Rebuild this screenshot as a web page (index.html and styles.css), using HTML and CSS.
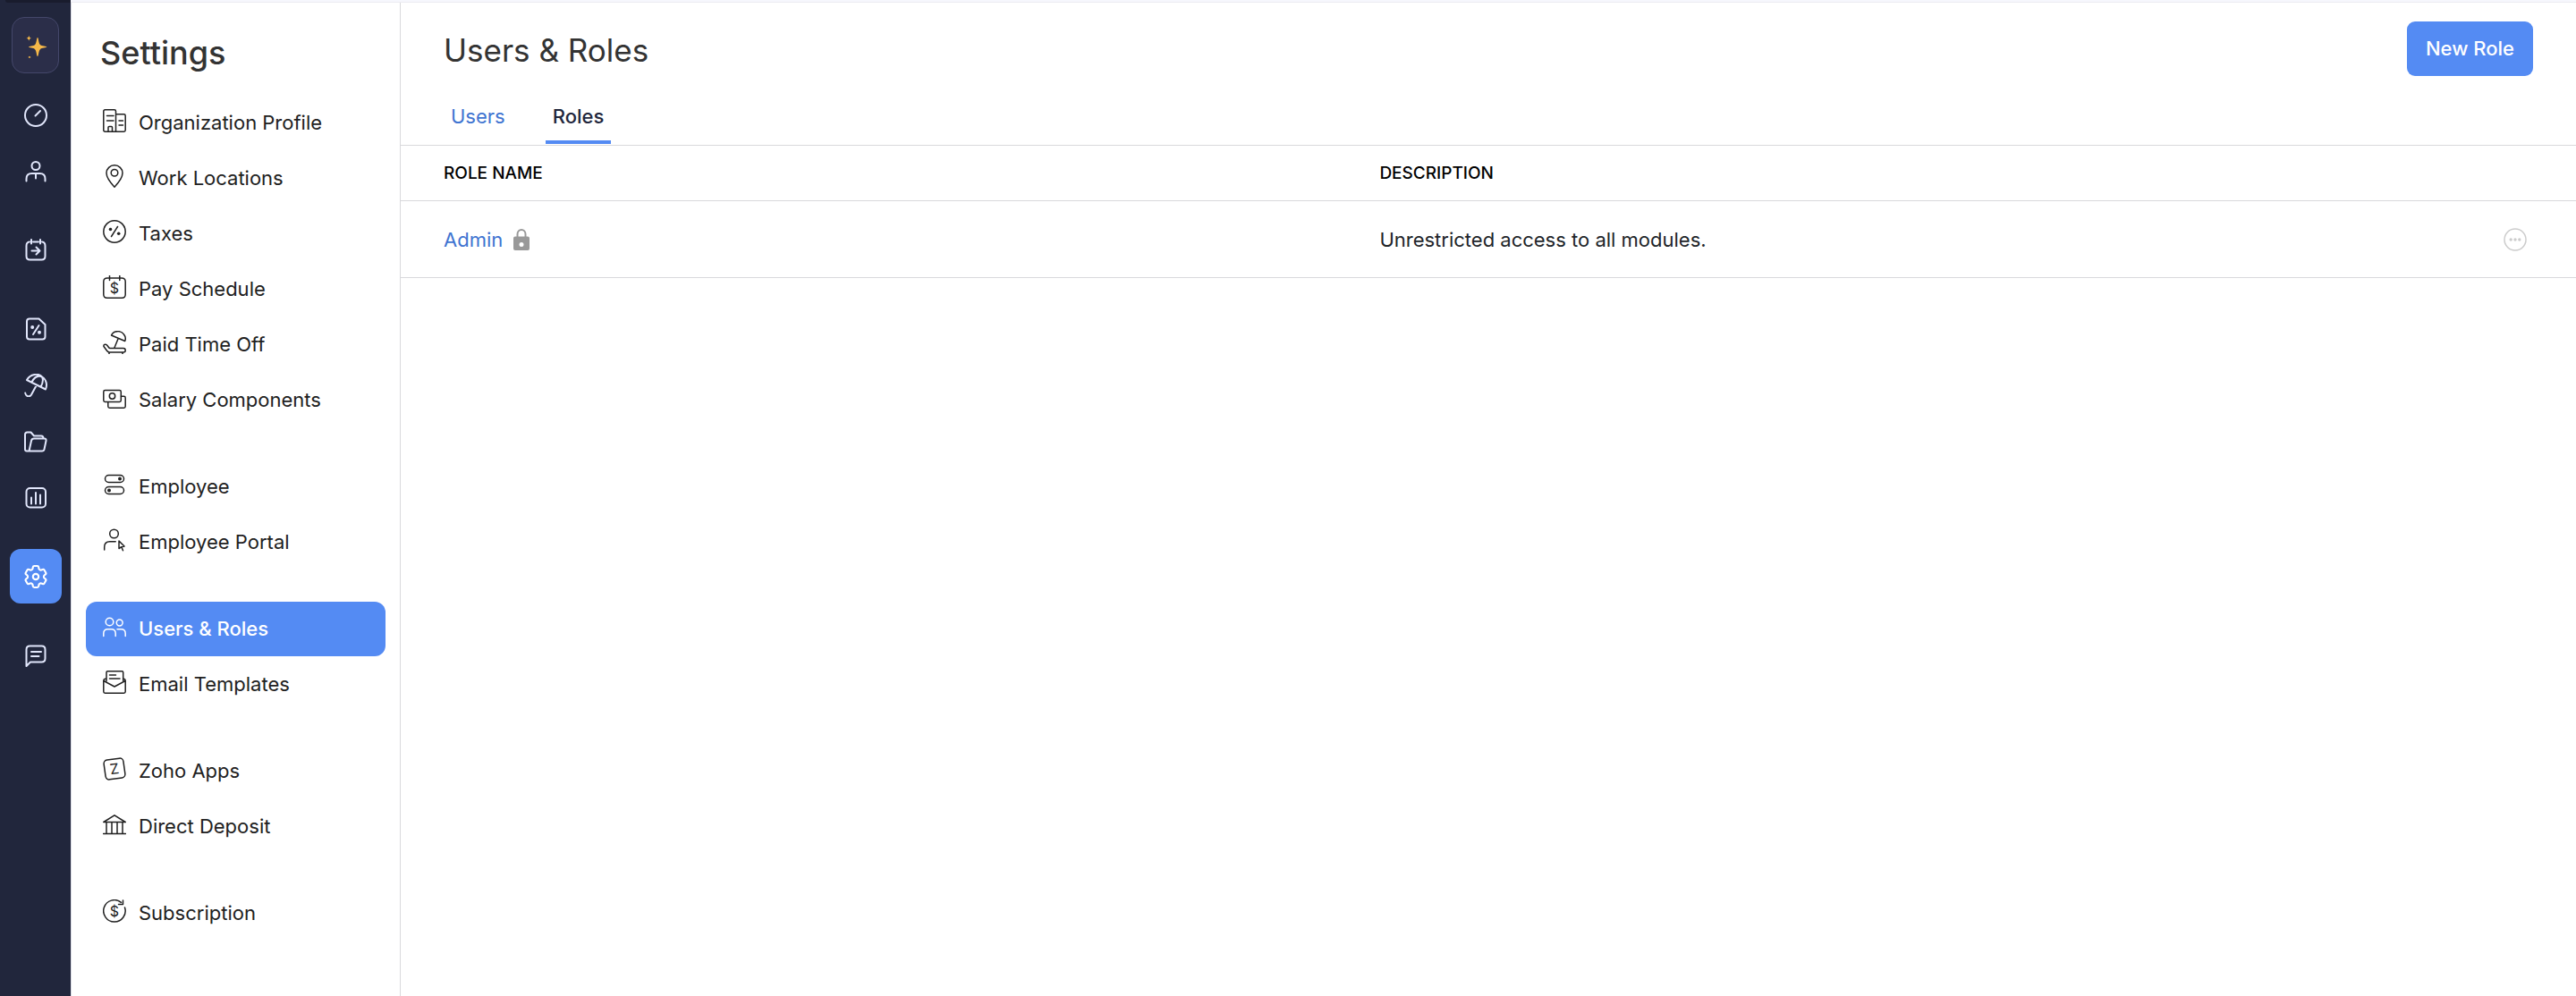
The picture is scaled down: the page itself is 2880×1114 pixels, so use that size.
FILE: index.html
```html
<!DOCTYPE html>
<html lang="en">
<head>
<meta charset="utf-8">
<meta name="viewport" content="width=device-width, initial-scale=1">
<title>Users &amp; Roles - Settings</title>
<link rel="stylesheet" href="styles.css">
</head>
<body>
<div class="app">
  <aside class="rail">
    <div class="rail-edge"></div>
    <nav class="rail-nav" aria-label="Modules">
      <button class="spark" type="button" aria-label="Assistant">
        <svg viewBox="0 0 26 26"><path d="M15 3c1.200 0 1 7 3.200 8.300C19.500 12.600 25.300 12.600 25.300 13.600c0 1-5.800 1-7.100 2.300C16 17.200 16.200 24 15 24c-1.200 0-1-6.800-3.200-8.100C10.500 14.600 5 14.600 5 13.600c0-1 5.500-1 6.800-2.300C14 10 13.800 3 15 3zM5.300.800c.4 2 1 2.600 2.900 3-1.900.4-2.500 1-2.900 3-.4-2-1-2.600-2.900-3 1.900-.4 2.500-1 2.900-3zM6 23.800l1.500 1.300L6 26l-1.500-.9z"/></svg>
      </button>
      <div class="rail-group">
        <a class="rail-item" href="#" aria-label="Dashboard"><svg viewBox="0 0 26 26"><circle cx="13" cy="13" r="12"/><path d="M12.500 13.500l5.500-5.500"/></svg></a>
        <a class="rail-item" href="#" aria-label="Employees"><svg viewBox="0 0 26 26"><circle cx="13" cy="6.500" r="4.500"/><path d="M2.500 23.500v-2.500q0-6 6-6h9q6 0 6 6v2.500M13 15v5.500"/></svg></a>
      </div>
      <div class="rail-group">
        <a class="rail-item" href="#" aria-label="Pay runs"><svg viewBox="0 0 26 26"><path d="M6 3.500Q2.500 4 2.500 8v11.500q0 4 4 4h13q4 0 4-4V8q0-4-3.500-4.500M10 3.500h6M8 1v4.500M18 1v4.500M8.500 13.500H17M13.500 9.500l4 4-4 4"/></svg></a>
      </div>
      <div class="rail-group">
        <a class="rail-item" href="#" aria-label="Taxes"><svg viewBox="0 0 26 26"><path d="M6 1.500h10.500L23.500 8v13.500q0 3-3 3H6q-3 0-3-3v-17q0-3 3-3zM16.500 9L10 19"/><circle class="dot" cx="9.200" cy="11" r="2"/><circle class="dot" cx="17" cy="16.700" r="2"/></svg></a>
        <a class="rail-item" href="#" aria-label="Benefits"><svg viewBox="0 0 26 26"><path d="M3 7C7 0 16-1 20 3.500c5 3 6 9 4 14L3 7zM8.500 9.300C12 3 16 1.500 20 3.500c1.500 3 1 7-1.500 11.200M14 12.500l-6 11Q6.500 26 3.500 25 1.500 24 1.200 21.500"/></svg></a>
        <a class="rail-item" href="#" aria-label="Documents"><svg viewBox="0 0 26 26"><path d="M5.500 23.500H3q-2 0-2-2V5q0-2.500 2.500-2.500h4l3.500 4h8q2.500 0 2.500 3M5.500 23.500l2.500-11.500q.5-2.500 3-2.500h11.500q2.500 0 2 2.500L22.500 21.500q-.5 2-2.500 2z"/></svg></a>
        <a class="rail-item" href="#" aria-label="Reports"><svg viewBox="0 0 26 26"><rect x="2.500" y="2" width="21.500" height="21.500" rx="4"/><path d="M8 12.500v7M13 7v12.500M18 9.500v10"/></svg></a>
      </div>
      <div class="rail-group">
        <a class="rail-item rail-item-active" href="#" aria-label="Settings" aria-current="page"><svg viewBox="2.200 2.200 19.600 19.600"><path class="gear" d="M9.594 3.940c.09-.542.56-.94 1.110-.94h2.593c.55 0 1.020.398 1.110.94l.213 1.281c.063.374.313.686.645.87.074.04.147.083.22.127.325.196.72.257 1.075.124l1.217-.456a1.125 1.125 0 0 1 1.370.49l1.296 2.247a1.125 1.125 0 0 1-.26 1.431l-1.003.827c-.293.241-.438.613-.43.992a7.723 7.723 0 0 1 0 .255c-.008.378.137.75.43.991l1.004.827c.424.35.534.955.26 1.430l-1.298 2.247a1.125 1.125 0 0 1-1.369.491l-1.217-.456c-.355-.133-.75-.072-1.076.124a6.470 6.470 0 0 1-.22.128c-.331.183-.581.495-.644.869l-.213 1.281c-.09.543-.56.94-1.110.94h-2.594c-.55 0-1.019-.398-1.110-.94l-.213-1.281c-.062-.374-.312-.686-.644-.87a6.520 6.520 0 0 1-.22-.127c-.325-.196-.72-.257-1.076-.124l-1.217.456a1.125 1.125 0 0 1-1.369-.49l-1.297-2.247a1.125 1.125 0 0 1 .26-1.431l1.004-.827c.292-.24.437-.613.43-.991a6.932 6.932 0 0 1 0-.255c.007-.38-.138-.751-.43-.992l-1.004-.827a1.125 1.125 0 0 1-.26-1.430l1.297-2.247a1.125 1.125 0 0 1 1.370-.491l1.216.456c.356.133.751.072 1.076-.124.072-.044.146-.086.22-.128.332-.183.582-.495.644-.869l.214-1.280z"/><circle class="gear" cx="12" cy="12" r="2.400"/></svg></a>
      </div>
      <div class="rail-group">
        <a class="rail-item" href="#" aria-label="Messages"><svg viewBox="0 0 26 26"><path d="M2.500 25V6.500q0-4 4-4h13q4 0 4 4v10q0 4-4 4H7L2.500 25zM8 9h11M8 14h8.500"/></svg></a>
      </div>
    </nav>
  </aside>

  <div class="page">
    <div class="page-edge"></div>
    <div class="columns">
      <aside class="settings">
        <h2 class="settings-title">Settings</h2>
        <nav class="menu" aria-label="Settings">
          <ul class="menu-group">
            <li><a class="menu-item" href="#"><svg viewBox="0 0 26 26"><path d="M14.500 25.200H2.500q-1.700 0-1.700-1.700v-21Q.8.800 2.500.8h10.300q1.700 0 1.700 1.700v22.700h9q1.700 0 1.700-1.700v-16q0-1.700-1.700-1.700h-9M4.500 7.500h7.500M4.500 13h7.500M18 13h4.500M18 18h4.500M6 25v-4.500q0-1 1-1h2.500q1 0 1 1V25"/></svg>Organization Profile</a></li>
            <li><a class="menu-item" href="#"><svg viewBox="0 0 26 26"><path d="M13 25.200Q4 15.500 4 9.500a9 8.700 0 0 1 18 0Q22 15.500 13 25.200z"/><circle cx="13" cy="9.200" r="3.800"/></svg>Work Locations</a></li>
            <li><a class="menu-item" href="#"><svg viewBox="0 0 26 26"><circle cx="13" cy="13" r="12.200"/><path d="M16.500 7.500l-7 11"/><circle class="dot" cx="8.500" cy="10.500" r="1.800"/><circle class="dot" cx="17.700" cy="15.200" r="1.800"/></svg>Taxes</a></li>
            <li><a class="menu-item" href="#"><svg viewBox="0 0 26 26"><path d="M5 3Q.8 3 .8 7v14.200q0 4 4 4h16.400q4 0 4-4V7q0-4-4.200-4M5 3h16M7.500.5v5M18.800.5v5"/><text x="13" y="20" text-anchor="middle">$</text></svg>Pay Schedule</a></li>
            <li><a class="menu-item" href="#"><svg viewBox="0 0 26 26"><path d="M9.500 5C12-.5 20-.8 23.500 4c2 2.600 2 5.500 1.200 7.500L9.500 5zM17.200 8.500l-4.500 11M8 19.500h15q2.200 0 2.200 2.400 0 2-2.200 2H7.200q-1.500 0-2.500-1.400L1 17.500Q.5 15 3 15.200q1.200.1 2.200 1.500l1.300 1.800q.6 1 1.500 1zM7 24v2M22 24v2"/></svg>Paid Time Off</a></li>
            <li><a class="menu-item" href="#"><svg viewBox="0 0 26 26"><rect x=".8" y="4.500" width="19.500" height="13" rx="1.700"/><circle cx="10.500" cy="11" r="3.200"/><path d="M20.500 11.300h3q1.700 0 1.700 1.700v9.500q0 1.700-1.700 1.700H7.500q-1.700 0-1.700-1.700v-4.800"/></svg>Salary Components</a></li>
          </ul>
          <ul class="menu-group">
            <li><a class="menu-item" href="#"><svg viewBox="0 0 26 26"><rect x="2.500" y="2.500" width="21" height="8" rx="4"/><rect x="2.500" y="15.500" width="21" height="8" rx="4"/><circle class="dot" cx="19" cy="6.500" r="2"/><circle class="dot" cx="7" cy="19.500" r="2"/></svg>Employee</a></li>
            <li><a class="menu-item" href="#"><svg viewBox="0 0 26 26"><circle cx="12.500" cy="6" r="4.800"/><path d="M1.700 24v-3q0-6.300 6-6.300h6.500M18 14l6 6-3.200.7 1.700 4M18 14v8.500l2.800-1.800"/></svg>Employee Portal</a></li>
          </ul>
          <ul class="menu-group">
            <li><a class="menu-item menu-item-active" href="#" aria-current="page"><svg viewBox="0 0 26 26"><circle cx="7.500" cy="7.500" r="4.300"/><circle cx="18.700" cy="8.500" r="3.400"/><path d="M.8 23.500v-3q0-4.800 4.700-4.800h4q4.700 0 4.700 4.800v3M16 15.700h4.500q4.700 0 4.700 4.800v3"/></svg>Users &amp; Roles</a></li>
            <li><a class="menu-item" href="#"><svg viewBox="0 0 26 26"><path d="M4 11.500V2q0-1.200 1.200-1.200h16.300q1.200 0 1.200 1.200v9.500M7.500 5h7M7.500 9h11.500M4 9L2 9.500Q.8 10 .8 11.500v12q0 1.700 1.700 1.700h21q1.700 0 1.700-1.700v-12q0-1.500-1.200-2L22.500 9M1 11.500l12 6.500 12-6.500"/></svg>Email Templates</a></li>
          </ul>
          <ul class="menu-group">
            <li><a class="menu-item" href="#"><svg viewBox="0 0 26 26"><g transform="rotate(-8 13 13)"><rect x="2" y="2" width="22" height="22" rx="4"/><text x="13" y="18.500" text-anchor="middle">Z</text></g></svg>Zoho Apps</a></li>
            <li><a class="menu-item" href="#"><svg viewBox="0 0 26 26"><path d="M.8 10.500L13 2.800l12.200 7.700zM.5 23.500h25M4 10.500v13M10 10.500v13M16 10.500v13M22 10.500v13"/></svg>Direct Deposit</a></li>
          </ul>
          <ul class="menu-group">
            <li><a class="menu-item" href="#"><svg viewBox="0 0 26 26"><path d="M24.500 9A12.200 12.200 0 1 1 20.500 3.300M22.500 1v4.500H17.500"/><text x="13" y="18.500" text-anchor="middle">$</text></svg>Subscription</a></li>
          </ul>
        </nav>
      </aside>

      <main class="content">
        <header class="content-head">
          <h1 class="content-title">Users &amp; Roles</h1>
          <button class="primary" type="button">New Role</button>
        </header>
        <nav class="tabs" aria-label="Users and roles">
          <a class="tab" href="#">Users</a>
          <a class="tab tab-active" href="#" aria-current="page">Roles</a>
        </nav>
        <table class="roles">
          <thead>
            <tr><th class="col-name" scope="col">ROLE NAME</th><th scope="col">DESCRIPTION</th><td class="col-more"></td></tr>
          </thead>
          <tbody>
            <tr>
              <td class="col-name"><div class="role"><a href="#">Admin</a><svg class="lock" viewBox="0 0 18 24"><path d="M4.500 10V6a4.500 5 0 0 1 9 0v4" fill="none" stroke="currentColor" stroke-width="2"/><path fill="currentColor" fill-rule="evenodd" d="M2 8.500h14q2 0 2 2V22q0 2-2 2H2q-2 0-2-2V10.500q0-2 2-2zm7 6.500a2.500 2.500 0 1 0 0 5 2.500 2.500 0 0 0 0-5z"/></svg></div></td>
              <td>Unrestricted access to all modules.</td>
              <td class="col-more"><button class="more" type="button" aria-label="More actions"><svg viewBox="0 0 26 26"><circle cx="13" cy="13" r="12" fill="none" stroke="currentColor" stroke-width="1.500"/><g fill="currentColor"><circle cx="8.200" cy="13" r="1.700"/><circle cx="13" cy="13" r="1.700"/><circle cx="17.800" cy="13" r="1.700"/></g></svg></button></td>
            </tr>
          </tbody>
        </table>
      </main>
    </div>
  </div>
</div>
</body>
</html>
```
FILE: styles.css
```css
* { box-sizing: border-box; }

body {
  margin: 0;
  background: #fff;
  color: #212121;
  font-family: Inter, "Liberation Sans", sans-serif;
  font-size: 22px;
  line-height: 32px;
}

a { color: inherit; text-decoration: none; }
button { font: inherit; cursor: pointer; }
svg { display: block; flex: none; }
h1, h2, ul { margin: 0; padding: 0; }
ul { list-style: none; }

.app { display: flex; min-height: 100vh; }

/* Module rail */
.rail { flex: 0 0 79px; background: #21263c; }
.rail-edge {
  height: 3px;
  margin-left: 6px;
  border-bottom-left-radius: 8px;
  background: #191c2d;
}
.rail-nav {
  display: flex;
  flex-direction: column;
  align-items: center;
  padding: 16px 0;
}
.spark {
  display: grid;
  place-items: center;
  width: 53px;
  height: 63px;
  margin-bottom: 16px;
  padding: 2px 0 0;
  border: 1px solid #44476a;
  border-radius: 14px;
  background: #2b2e49;
}
.spark svg { width: 26px; height: 26px; fill: #f5b849; }
.rail-group { display: flex; flex-direction: column; gap: 2px; }
.rail-group + .rail-group { margin-top: 27px; }
.rail-item {
  display: grid;
  place-items: center;
  width: 58px;
  height: 61px;
  border-radius: 12px;
  color: #e1e6fb;
}
.rail-item-active { background: #548bf3; color: #fff; }
.rail-item svg {
  width: 26px;
  height: 26px;
  fill: none;
  stroke: currentColor;
  stroke-width: 2;
  stroke-linecap: round;
  stroke-linejoin: round;
}
.rail-item .gear { stroke-width: 1.600; }
.rail-item .dot, .menu-item .dot { fill: currentColor; stroke: none; }

/* Page */
.page { display: flex; flex: 1; flex-direction: column; min-width: 0; }
.page-edge { height: 3px; border-bottom: 1px solid #ececf1; background: #f6f7fd; }
.columns { display: flex; flex: 1; }

/* Settings menu */
.settings {
  flex: 0 0 369px;
  padding: 34px 16px;
  border-right: 1px solid #d9d9dc;
  border-left: 1px solid #dadce6;
}
.settings-title {
  padding-left: 16px;
  color: #333;
  font-size: 36px;
  font-weight: 500;
  line-height: 44px;
}
.menu { margin-top: 26px; }
.menu-group { display: flex; flex-direction: column; gap: 1px; }
.menu-group + .menu-group { margin-top: 36px; }
.menu-item {
  display: flex;
  align-items: center;
  gap: 14px;
  height: 61px;
  padding: 0 0 2px 19px;
  border-radius: 12px;
}
.menu-item-active { background: #548bf3; color: #fff; font-weight: 500; }
.menu-item svg {
  width: 26px;
  height: 26px;
  margin-bottom: 4px;
  fill: none;
  stroke: currentColor;
  stroke-width: 1.500;
  stroke-linecap: round;
  stroke-linejoin: round;
}
.menu-item text { fill: currentColor; stroke: none; font-size: 16px; font-weight: 400; }

/* Content */
.content { flex: 1; min-width: 0; }
.content-head {
  display: flex;
  align-items: center;
  justify-content: space-between;
  padding: 21px 48px 0 48px;
}
.content-title { color: #333; font-size: 35px; font-weight: 400; line-height: 44px; padding-top: 2px; }
.primary {
  height: 61px;
  padding: 0 21px 2px;
  border: 0;
  border-radius: 9px;
  background: #548bf3;
  color: #fff;
  font-weight: 500;
}
.tabs {
  display: flex;
  gap: 37px;
  margin-top: 12px;
  padding: 0 48px 1px;
  border-bottom: 1px solid #d9d9dc;
}
.tab {
  padding: 17px 8px 11px;
  border-bottom: 4px solid transparent;
  color: #3f74d1;
}
.tab-active { border-bottom-color: #548bf3; color: #21263c; font-weight: 500; }

.roles { width: 100%; border-collapse: separate; border-spacing: 0; table-layout: fixed; }
.roles th, .roles td {
  padding: 0;
  border-bottom: 1px solid #d9d9dc;
  text-align: left;
  vertical-align: middle;
}
.roles th { height: 62px; color: #000; font-size: 19px; font-weight: 500; }
.roles tbody td { height: 86px; color: #212529; }
.roles .col-name { width: 45%; padding-left: 48px; }
.roles .col-more { width: 120px; padding-right: 55px; }
.role { display: flex; align-items: center; gap: 12px; color: #3f74d1; }
.lock { width: 18px; height: 24px; color: #999; }
.more {
  display: block;
  margin-left: auto;
  padding: 0;
  border: 0;
  background: none;
  color: #ccc;
}
.more svg { width: 26px; height: 26px; }
```
